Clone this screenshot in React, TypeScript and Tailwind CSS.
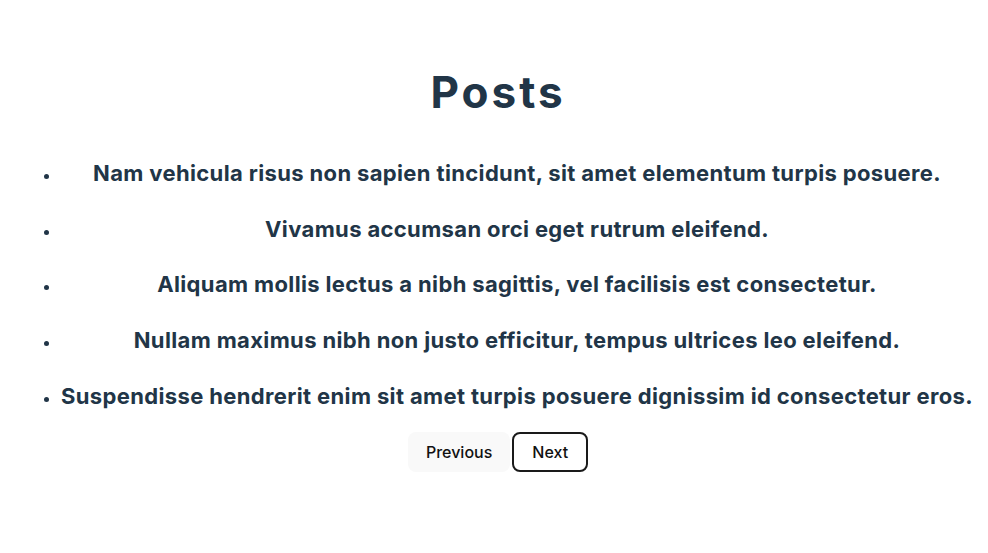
const posts = [
  "Nam vehicula risus non sapien tincidunt, sit amet elementum turpis posuere.",
  "Vivamus accumsan orci eget rutrum eleifend.",
  "Aliquam mollis lectus a nibh sagittis, vel facilisis est consectetur.",
  "Nullam maximus nibh non justo efficitur, tempus ultrices leo eleifend.",
  "Suspendisse hendrerit enim sit amet turpis posuere dignissim id consectetur eros.",
];

export default function App() {
  return (
    <div className="flex min-h-[553px] w-full flex-col items-center bg-white pl-[6px] pt-[60px] font-['Inter',sans-serif] text-[#213547]">
      <h1 className="pl-[2px] text-[44px] font-bold leading-[64px] tracking-[3px]">Posts</h1>
      <ul className="mt-[21px] list-disc pl-10 marker:text-[16px]">
        {posts.map((post) => (
          <li
            key={post}
            className="py-[13.9px] text-center text-[22px] font-bold leading-[28px] tracking-[0.36px]"
          >
            {post}
          </li>
        ))}
      </ul>
      <div className="mt-[8px] flex gap-[2px] pl-[2px]">
        <button className="rounded-lg border-2 border-transparent bg-[#f9f9f9] px-[16px] py-[7px] text-base font-medium leading-[22px] text-[#111]">
          Previous
        </button>
        <button className="rounded-lg border-2 border-[#1a1a1a] bg-white px-[18px] py-[7px] text-base font-medium leading-[22px] text-[#111]">
          Next
        </button>
      </div>
    </div>
  );
}
